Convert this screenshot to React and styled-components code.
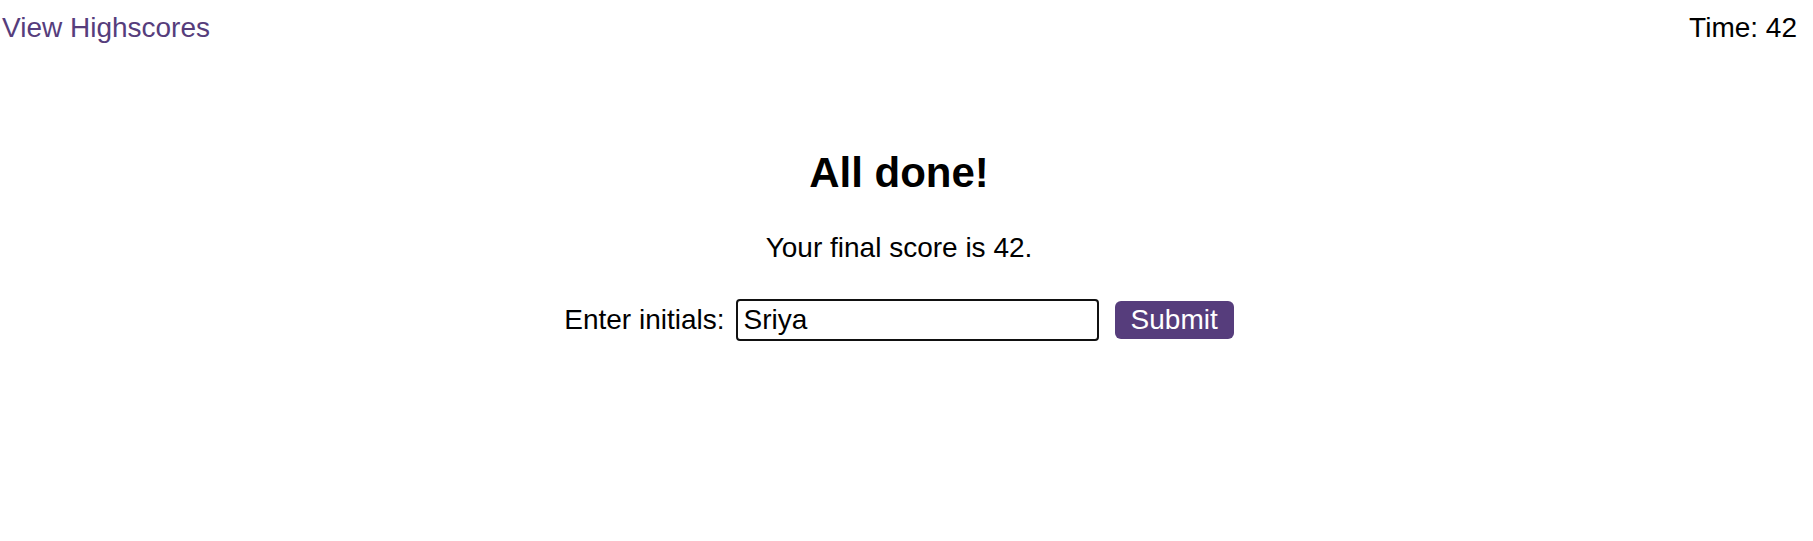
import React, { useEffect, useRef } from 'react'
import styled, { createGlobalStyle } from 'styled-components'

const GlobalStyle = createGlobalStyle`
  body {
    margin: 0;
    background: #fff;
    font-family: "Liberation Sans", Arial, sans-serif;
    font-size: 28px;
    color: #000;
  }
`

const Header = styled.header`
  display: flex;
  justify-content: space-between;
  align-items: center;
  padding: 12px 16px 0 2px;
`

const HighscoreLink = styled.a`
  color: #563d7c;
  text-decoration: none;
  cursor: pointer;
`

const Timer = styled.div`
  color: #000;
`

const Main = styled.main`
  display: flex;
  flex-direction: column;
  align-items: center;
  margin-top: 105px;
  padding-right: 15px;
`

const Title = styled.h1`
  margin: 0;
  font-size: 42px;
  font-weight: bold;
`

const Score = styled.p`
  margin: 35px 0 0;
`

const Form = styled.form`
  display: flex;
  align-items: center;
  margin-top: 35px;
`

const Label = styled.label`
  margin-right: 11px;
`

const Input = styled.input`
  box-sizing: border-box;
  width: 363px;
  height: 42px;
  padding: 0 6px;
  border: 2px solid #111;
  border-radius: 4px;
  outline: none;
  font-family: inherit;
  font-size: 28px;
  color: #000;
`

const SubmitBtn = styled.button`
  box-sizing: border-box;
  height: 38px;
  margin-left: 16px;
  padding: 0 16px;
  background-color: #563d7c;
  color: #fff;
  border: none;
  border-radius: 6px;
  font-family: inherit;
  font-size: 28px;
  line-height: 38px;
  cursor: pointer;
`

const App = () => {
  const inputRef = useRef(null)

  useEffect(() => {
    const el = inputRef.current
    if (el) {
      el.focus()
      el.setSelectionRange(el.value.length, el.value.length)
    }
  }, [])

  return (
    <>
      <GlobalStyle />
      <Header>
        <HighscoreLink>View Highscores</HighscoreLink>
        <Timer>Time: 42</Timer>
      </Header>

      <Main>
        <Title>All done!</Title>
        <Score>Your final score is 42.</Score>
        <Form onSubmit={(e) => e.preventDefault()}>
          <Label htmlFor="initials">Enter initials:</Label>
          <Input id="initials" ref={inputRef} defaultValue="Sriya" />
          <SubmitBtn type="submit">Submit</SubmitBtn>
        </Form>
      </Main>
    </>
  )
}

export default App
